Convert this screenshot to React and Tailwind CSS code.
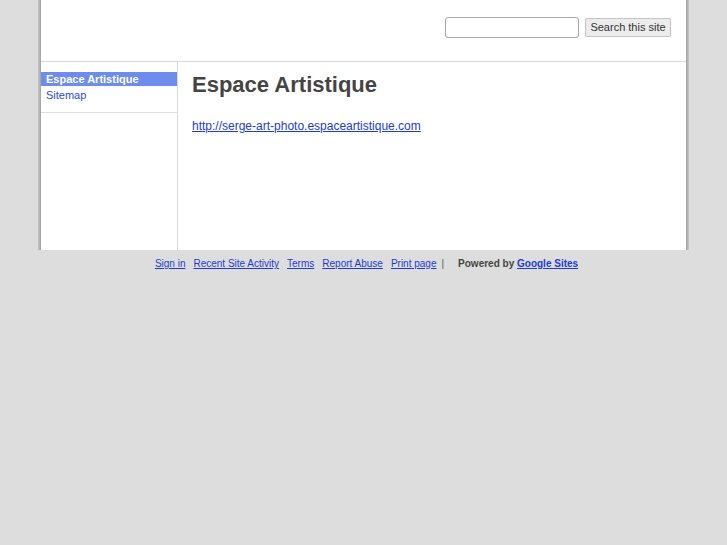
import React from 'react';

const font = { fontFamily: '"Liberation Sans", Arial, sans-serif' };

export default function App() {
  return (
    <div className="min-h-[545px] bg-[#dddddd] text-[13px]" style={font}>
      <div className="ml-[38px] w-[651px] flex">
        <div className="w-[3px] bg-gradient-to-r from-[#c8c8c8] to-[#a0a0a0]" />
        <div className="flex-1 bg-white">
          {/* header */}
          <div className="h-[62px] border-b border-[#d8d8d8] flex items-start justify-end pt-[17px] pr-[15px] gap-[6px]">
            <input className="w-[134px] h-[21px] border border-[#a8a8a8] rounded-[3px] bg-white" />
            <button className="h-[19px] mt-[1px] w-[86px] border border-[#c4c4c4] rounded-[2px] bg-[#ececec] text-[11px] text-[#333] leading-none">
              Search this site
            </button>
          </div>
          <div className="flex h-[188px]">
            {/* sidebar */}
            <div className="w-[137px] border-r border-[#d8d8d8]">
              <div className="pt-[10px] border-b border-[#dcdcdc]">
                <div className="bg-[#6d8ced] text-white font-bold text-[11px] leading-[14px] px-[5px]">Espace Artistique</div>
                <div className="text-[#2a4ad6] text-[11px] leading-[14px] px-[5px] pt-[2px] pb-[10px]">Sitemap</div>
              </div>
            </div>
            {/* content */}
            <div className="flex-1 pl-[14px] pt-[10px]">
              <h1 className="text-[22px] font-bold text-[#444] leading-[26px]">Espace Artistique</h1>
              <a href="#" className="block mt-[19px] text-[12px] text-[#1c3bd1] underline">http://serge-art-photo.espaceartistique.com</a>
            </div>
          </div>
        </div>
        <div className="w-[3px] bg-gradient-to-r from-[#a0a0a0] to-[#c8c8c8]" />
      </div>
      <div className="flex justify-center pt-[6px] text-[10px] ml-[6px]">
        <div className="flex items-center gap-[8px]">
          <a href="#" className="text-[#1c3bd1] underline">Sign in</a>
          <a href="#" className="text-[#1c3bd1] underline">Recent Site Activity</a>
          <a href="#" className="text-[#1c3bd1] underline">Terms</a>
          <a href="#" className="text-[#1c3bd1] underline">Report Abuse</a>
          <a href="#" className="text-[#1c3bd1] underline">Print page</a>
          <span className="text-[#555] -ml-[3px]">|</span>
          <span className="text-[#444] font-bold ml-[6px]">Powered by <a href="#" className="text-[#1c3bd1] underline">Google Sites</a></span>
        </div>
      </div>
    </div>
  );
}
